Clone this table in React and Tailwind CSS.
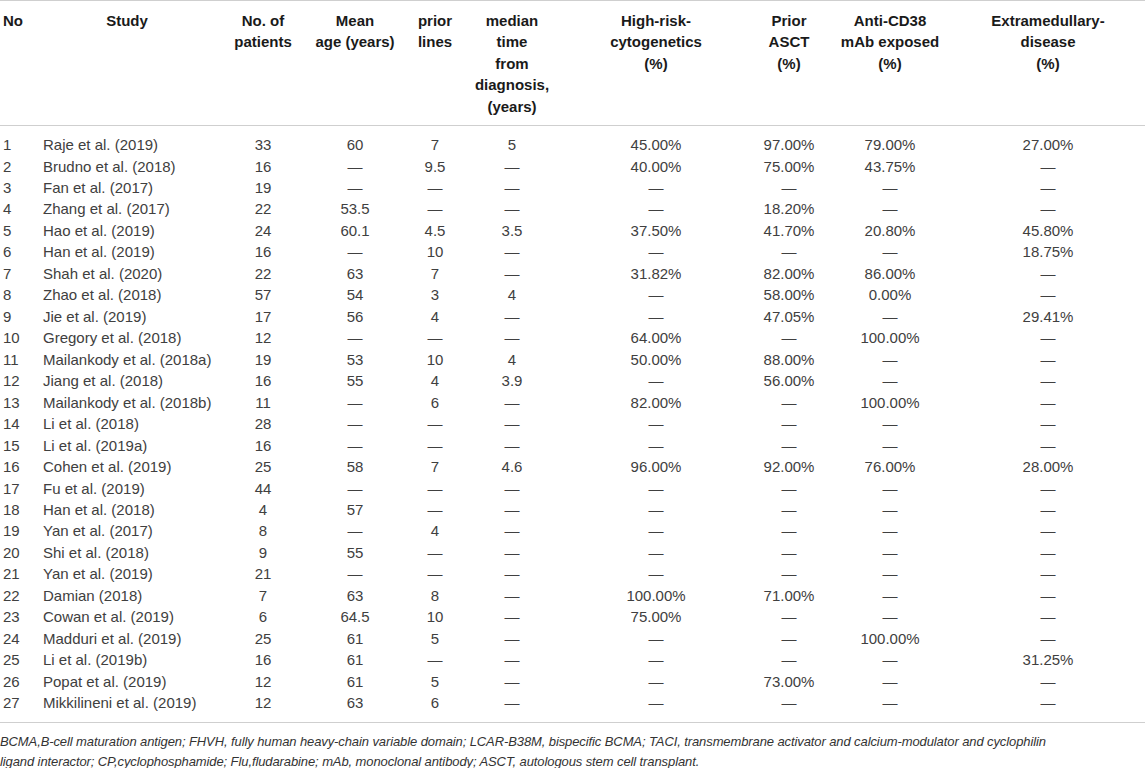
import React from "react";

const D = "—";
const rows = [
  ["1", "Raje et al. (2019)", "33", "60", "7", "5", "45.00%", "97.00%", "79.00%", "27.00%"],
  ["2", "Brudno et al. (2018)", "16", D, "9.5", D, "40.00%", "75.00%", "43.75%", D],
  ["3", "Fan et al. (2017)", "19", D, D, D, D, D, D, D],
  ["4", "Zhang et al. (2017)", "22", "53.5", D, D, D, "18.20%", D, D],
  ["5", "Hao et al. (2019)", "24", "60.1", "4.5", "3.5", "37.50%", "41.70%", "20.80%", "45.80%"],
  ["6", "Han et al. (2019)", "16", D, "10", D, D, D, D, "18.75%"],
  ["7", "Shah et al. (2020)", "22", "63", "7", D, "31.82%", "82.00%", "86.00%", D],
  ["8", "Zhao et al. (2018)", "57", "54", "3", "4", D, "58.00%", "0.00%", D],
  ["9", "Jie et al. (2019)", "17", "56", "4", D, D, "47.05%", D, "29.41%"],
  ["10", "Gregory et al. (2018)", "12", D, D, D, "64.00%", D, "100.00%", D],
  ["11", "Mailankody et al. (2018a)", "19", "53", "10", "4", "50.00%", "88.00%", D, D],
  ["12", "Jiang et al. (2018)", "16", "55", "4", "3.9", D, "56.00%", D, D],
  ["13", "Mailankody et al. (2018b)", "11", D, "6", D, "82.00%", D, "100.00%", D],
  ["14", "Li et al. (2018)", "28", D, D, D, D, D, D, D],
  ["15", "Li et al. (2019a)", "16", D, D, D, D, D, D, D],
  ["16", "Cohen et al. (2019)", "25", "58", "7", "4.6", "96.00%", "92.00%", "76.00%", "28.00%"],
  ["17", "Fu et al. (2019)", "44", D, D, D, D, D, D, D],
  ["18", "Han et al. (2018)", "4", "57", D, D, D, D, D, D],
  ["19", "Yan et al. (2017)", "8", D, "4", D, D, D, D, D],
  ["20", "Shi et al. (2018)", "9", "55", D, D, D, D, D, D],
  ["21", "Yan et al. (2019)", "21", D, D, D, D, D, D, D],
  ["22", "Damian (2018)", "7", "63", "8", D, "100.00%", "71.00%", D, D],
  ["23", "Cowan et al. (2019)", "6", "64.5", "10", D, "75.00%", D, D, D],
  ["24", "Madduri et al. (2019)", "25", "61", "5", D, D, D, "100.00%", D],
  ["25", "Li et al. (2019b)", "16", "61", D, D, D, D, D, "31.25%"],
  ["26", "Popat et al. (2019)", "12", "61", "5", D, D, "73.00%", D, D],
  ["27", "Mikkilineni et al. (2019)", "12", "63", "6", D, D, D, D, D],
];

const grid =
  "grid grid-cols-[38px_178px_94px_90px_70px_84px_204px_62px_140px_185px]";

const headers = [
  ["No"],
  ["Study"],
  ["No. of", "patients"],
  ["Mean", "age (years)"],
  ["prior", "lines"],
  ["median", "time", "from", "diagnosis,", "(years)"],
  ["High-risk-", "cytogenetics", "(%)"],
  ["Prior", "ASCT", "(%)"],
  ["Anti-CD38", "mAb exposed", "(%)"],
  ["Extramedullary-", "disease", "(%)"],
];

function cellClass(i) {
  if (i === 0) return "pl-[3px] text-left whitespace-nowrap";
  if (i === 1) return "pl-[5px] text-left whitespace-nowrap";
  if (i === 9) return "pr-[9px] text-center whitespace-nowrap";
  return "text-center whitespace-nowrap";
}

function headerClass(i) {
  if (i === 0) return "pl-[3px] text-left whitespace-nowrap";
  if (i === 9) return "pr-[9px] text-center whitespace-nowrap";
  return "text-center whitespace-nowrap";
}

export default function App() {
  return (
    <div className="w-[1145px] h-[768px] bg-white overflow-hidden font-['Liberation_Sans',Arial,sans-serif]">
      <div
        className={`${grid} border-t border-b border-[#cfcfcf] pt-[9px] pb-[8px] text-[15px] leading-[21.4px] font-bold text-[#1a1a1a]`}
      >
        {headers.map((lines, i) => (
          <div key={i} className={headerClass(i)}>
            {lines.map((l, j) => (
              <div key={j}>{l}</div>
            ))}
          </div>
        ))}
      </div>
      <div className="border-b border-[#cfcfcf] pt-[8px] pb-[8px] text-[15px] text-[#404040]">
        {rows.map((r, ri) => (
          <div key={ri} className={`${grid} h-[21.47px] leading-[21.47px]`}>
            {r.map((c, ci) => (
              <div key={ci} className={cellClass(ci)}>
                {c}
              </div>
            ))}
          </div>
        ))}
      </div>
      <div className="pt-[9px] text-[13px] tracking-[-0.1px] leading-[20px] italic text-[#333] whitespace-nowrap">
        <div>
          BCMA,B-cell maturation antigen; FHVH, fully human heavy-chain variable domain; LCAR-B38M, bispecific BCMA; TACI, transmembrane activator and calcium-modulator and cyclophilin
        </div>
        <div>
          ligand interactor; CP,cyclophosphamide; Flu,fludarabine; mAb, monoclonal antibody; ASCT, autologous stem cell transplant.
        </div>
      </div>
    </div>
  );
}
